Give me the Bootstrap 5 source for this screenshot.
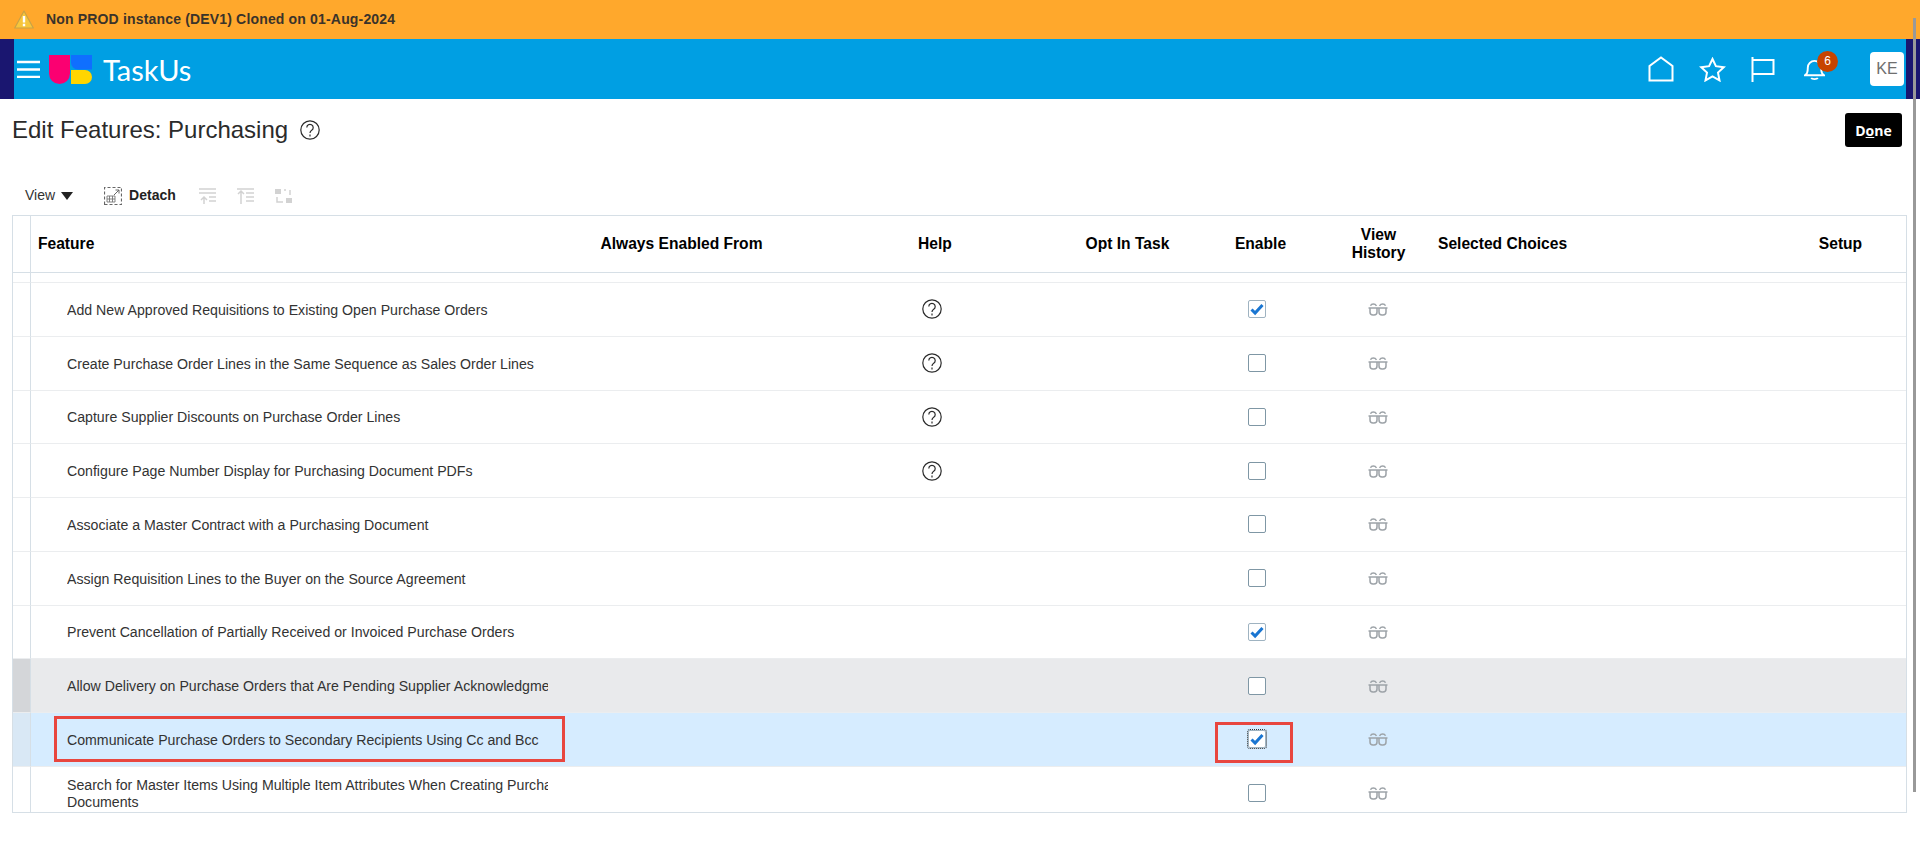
<!DOCTYPE html>
<html lang="en">
<head>
    <meta charset="UTF-8">
    <meta name="viewport" content="width=device-width, initial-scale=1.0">
    <title>Edit Features: Purchasing</title>
    <link href="https://cdn.jsdelivr.net/npm/bootstrap@5.3.0/dist/css/bootstrap.min.css" rel="stylesheet">
    <style>
        html, body { height: 100%; overflow: hidden; }
        body {
            font-family: "Liberation Sans", Arial, sans-serif;
            font-size: 14.15px;
            color: #333;
            background: #fff;
        }
        .env-banner {
            height: 39px;
            background: #ffa82c;
            padding-left: 14px;
            gap: 12px;
            font-weight: 700;
            font-size: 14px;
            color: #3a332a;
            letter-spacing: .012em;
        }
        .top-bar {
            height: 60px;
            background: #009fe3;
            border-left: 14px solid #1a1670;
            border-right: 14px solid #1a1670;
            padding: 0;
        }
        .burger { width: 23px; margin-left: 3px; margin-right: 9px; }
        .brand-name {
            font-family: Lato, sans-serif;
            font-size: 29px;
            font-weight: 400;
            color: #fff;
            line-height: 1;
            margin-left: 11px;
        }
        .top-icons { gap: 25px; }
        .bell-wrap { position: relative; width: 21px; height: 24px; margin-left: 4px; }
        .bell-count {
            position: absolute;
            top: -6px;
            left: 13px;
            width: 21px;
            height: 21px;
            border-radius: 50%;
            background: #c74400;
            color: #fff;
            font-size: 12px;
            line-height: 21px;
            text-align: center;
        }
        .user-tile {
            width: 34px;
            height: 34px;
            margin-left: 20px;
            margin-right: 2px;
            border-radius: 4px;
            background: #fff;
            color: #6f6f6f;
            font-size: 16px;
            line-height: 34px;
            text-align: center;
        }
        .page-head { padding: 13px 18px 0 12px; height: 79px; }
        .page-title { font-size: 24px; font-weight: 400; line-height: 36px; margin: 0; color: #2b2b2b; }
        .btn-done {
            width: 57px;
            height: 34px;
            padding: 0;
            margin-top: 1px;
            background: #000;
            color: #fff;
            border: 0;
            border-radius: 3px;
            font-family: "Open Sans", sans-serif;
            font-weight: 700;
            font-size: 14px;
        }
        .btn-done:hover { background: #000; color: #fff; }
        .tool-row { height: 35px; padding-left: 25px; margin-bottom: 2px; font-size: 14px; }
        .view-caret {
            width: 0;
            height: 0;
            margin: 0 31px 0 6px;
            border-left: 6px solid transparent;
            border-right: 6px solid transparent;
            border-top: 8px solid #222;
        }
        .detach-label { font-weight: 700; color: #222; margin: 0 23px 0 7px; }
        .off-icons { gap: 21px; }
        .table-frame {
            margin-left: 12px;
            width: 1895px;
            height: 598px;
            overflow: hidden;
            border: 1px solid #d6dfe6;
        }
        .feat-table {
            table-layout: fixed;
            width: 1893px;
            margin: 0;
            border-collapse: separate;
            border-spacing: 0;
            --bs-table-bg: transparent;
        }
        .feat-table.table > :not(caption) > * > * {
            padding: 0;
            border-bottom: 1px solid #ebedef;
            vertical-align: middle;
            box-shadow: none;
            color: #333;
        }
        .feat-table.table > thead > tr > th {
            height: 57px;
            font-size: 15.6px;
            line-height: 18px;
            color: #000;
            border-bottom-color: #d6dfe6;
        }
        .feat-table td { height: 53.75px; }
        .feat-table .gap-row td { height: 10px; }
        .feat-table.table > * > tr > .sel-cell { border-right: 1px solid #d6dfe6; }
        .feat-table .row-hover td { background: #e9eaec; }
        .feat-table .row-hover .sel-cell { background: #d4d6d9; }
        .feat-table .row-current td { background: #d6ecff; }
        .feat-table .row-current .sel-cell { background: #d9e8f5; }
        .feat-table.table > thead > tr > .name-head { padding-left: 7px; }
        .feat-table.table > tbody > tr > .name-cell { position: relative; padding: 2px 0 0 36px; }
        .name-clip { width: 481px; overflow: hidden; white-space: nowrap; line-height: 17px; }
        .help-ico { display: block; margin: 0 auto; position: relative; left: -3px; }
        .form-check-input.tick-box {
            display: block;
            width: 18px;
            height: 18px;
            margin: 0 0 0 54px;
            float: none;
            border: 1px solid #7f97a5;
            border-radius: 2px;
            background-color: #fff;
            box-shadow: none;
        }
        .form-check-input.tick-box:checked {
            background-color: #fff;
            border-color: #9fb3c1;
            background-image: url("data:image/svg+xml,%3csvg xmlns='http://www.w3.org/2000/svg' viewBox='0 0 18 18'%3e%3cpath fill='none' stroke='%231a76d2' stroke-width='3' d='M3.500 9.500l3.600 3.600 7.400-8.200'/%3e%3c/svg%3e");
            background-size: 18px 18px;
        }
        .form-check-input.tick-box.is-focus { outline: 1px dotted #333; outline-offset: 0; }
        .hist-ico { display: block; margin: 0 auto; position: relative; left: -1px; }
        .feat-table.table > thead > tr > .pad-left { padding-left: 8px; }
        .red-box { position: absolute; border: 3px solid #e8463f; pointer-events: none; }
        .red-name { left: 23px; top: 3px; width: 511px; height: 46px; }
        .red-tick { left: 21px; top: 9px; width: 78px; height: 41px; }
        .enable-cell { position: relative; }
        .fake-scroll {
            position: fixed;
            left: 1913px;
            top: 18px;
            width: 3px;
            height: 774px;
            background: #999;
        }
    </style>
</head>
<body>
    <svg width="0" height="0" class="position-absolute">
        <symbol id="ico-help" viewBox="0 0 20 20">
            <circle cx="10" cy="10" r="9.200" fill="none" stroke="#2b2b2b" stroke-width="1.200"/>
            <path d="M6.800 7.600a3.200 3.200 0 1 1 4.900 2.700c-1.100.7-1.700 1.200-1.700 2.700" fill="none" stroke="#2b2b2b" stroke-width="1.200"/>
            <path d="M10 14.600v2" stroke="#2b2b2b" stroke-width="1.200"/>
        </symbol>
        <symbol id="ico-hist" viewBox="0 0 20 14">
            <g fill="none" stroke="#9da3a8" stroke-width="1.500">
                <path d="M.5 6h19"/>
                <path d="M2 6v4a3 3 0 0 0 3 3h1a3 3 0 0 0 3-3V6"/>
                <path d="M11 6v4a3 3 0 0 0 3 3h1a3 3 0 0 0 3-3V6"/>
                <path d="M2.500 3.800C3.500 1.500 7 1.500 8.500 3.800"/>
                <path d="M11.500 3.800C13 1.500 16.500 1.500 17.500 3.800"/>
            </g>
        </symbol>
    </svg>

    <div class="env-banner d-flex align-items-center">
        <svg width="20" height="19" viewBox="0 0 20 19">
            <path d="M10 1L19.300 18H.7Z" fill="#f7c63c" stroke="#c9a246" stroke-width="1.200" stroke-linejoin="round"/>
            <path d="M10 6v6.500M10 13.800v2.400" stroke="#fff" stroke-width="2.400"/>
        </svg>
        <span>Non PROD instance (DEV1) Cloned on 01-Aug-2024</span>
    </div>

    <nav class="navbar top-bar flex-nowrap justify-content-between">
        <div class="d-flex align-items-center">
            <svg class="burger" height="18" viewBox="0 0 23 18">
                <path d="M0 2h23M0 9.500h23M0 17h23" stroke="#fff" stroke-width="2.500"/>
            </svg>
            <svg width="43" height="29" viewBox="0 0 43 29">
                <path d="M0 0h21v18.500a10.500 10.500 0 0 1-21 0Z" fill="#fb0071"/>
                <path d="M22 0h21v14.500h-14a7 7 0 0 1-7-7Z" fill="#0f6fff"/>
                <path d="M22 15h14a7 7 0 0 1 7 7 7 7 0 0 1-7 7H22Z" fill="#ffd500"/>
            </svg>
            <span class="brand-name">TaskUs</span>
        </div>
        <div class="d-flex align-items-center top-icons">
            <svg width="26" height="26" viewBox="0 0 26 26">
                <path d="M1.500 24.500V10L13 1.500 24.500 10v14.500Z" fill="none" stroke="#fff" stroke-width="2"/>
            </svg>
            <svg width="27" height="25" viewBox="0 0 27 25">
                <path d="M13.500 2l3.400 7.200 7.900 1-5.800 5.400 1.500 7.800-7-3.900-7 3.900 1.500-7.800L2.200 10.200l7.900-1Z" fill="none" stroke="#fff" stroke-width="2"/>
            </svg>
            <svg width="24" height="25" viewBox="0 0 24 25">
                <path d="M1.500 0v25M1.500 3h21v14h-21" fill="none" stroke="#fff" stroke-width="2"/>
            </svg>
            <div class="bell-wrap">
                <svg width="21" height="24" viewBox="0 0 22 24">
                    <path d="M1 18.500c2-1.500 3-2.500 3-8a7 7 0 0 1 14 0c0 5.500 1 6.500 3 8Z" fill="none" stroke="#fff" stroke-width="2"/>
                    <path d="M7.500 21.500c1 1.500 6 1.500 7 0" fill="none" stroke="#fff" stroke-width="2"/>
                </svg>
                <span class="bell-count">6</span>
            </div>
            <div class="user-tile">KE</div>
        </div>
    </nav>

    <div class="page-head d-flex justify-content-between align-items-start">
        <div class="d-flex align-items-center gap-2">
            <h1 class="page-title">Edit Features: Purchasing</h1>
            <svg width="20" height="20" class="ms-1"><use href="#ico-help"/></svg>
        </div>
        <button class="btn btn-done" type="button">D<u>o</u>ne</button>
    </div>

    <div class="tool-row d-flex align-items-center">
        <span>View</span>
        <span class="view-caret"></span>
        <svg width="18" height="18" viewBox="0 0 18 18">
            <path d="M.500 17.500V.500h17v17Z" fill="none" stroke="#666" stroke-width="1.200" stroke-dasharray="3 2"/>
            <path d="M10 8l5-5M11.500 3H15v3.500" fill="none" stroke="#666"/>
            <path d="M3 9h8v6H3ZM3 12h8M5.500 9v6M8.500 9v6" fill="none" stroke="#777" stroke-width=".9"/>
        </svg>
        <span class="detach-label">Detach</span>
        <div class="d-flex off-icons">
            <svg width="17" height="16" viewBox="0 0 17 16"><path d="M0 1h17M0 5h17M10 9h7M10 13h7M5 16V9M2 12l3-3 3 3" fill="none" stroke="#d2d2d2" stroke-width="1.500"/></svg>
            <svg width="17" height="16" viewBox="0 0 17 16"><path d="M0 1h17M9 5h8M9 9h8M9 13h8M4 16V3M1 6l3-3 3 3" fill="none" stroke="#d2d2d2" stroke-width="1.500"/></svg>
            <svg width="17" height="16" viewBox="0 0 17 16"><path d="M0 1h6v5H0ZM11 10h6v5h-6Z" fill="#d2d2d2"/><path d="M9 2h2M15 2v5M2 9v5h6" fill="none" stroke="#d2d2d2" stroke-width="1.500"/></svg>
        </div>
    </div>

    <div class="table-frame">
        <table class="table feat-table">
            <colgroup>
                <col style="width:18px"><col style="width:523px"><col style="width:255px"><col style="width:252px">
                <col style="width:133px"><col style="width:133px"><col style="width:103px"><col style="width:345px"><col>
            </colgroup>
            <thead>
                <tr>
                    <th class="sel-cell"></th>
                    <th class="name-head">Feature</th>
                    <th class="text-center">Always Enabled From</th>
                    <th class="text-center">Help</th>
                    <th class="text-center">Opt In Task</th>
                    <th class="text-center">Enable</th>
                    <th class="text-center">View<br>History</th>
                    <th class="pad-left">Selected Choices</th>
                    <th class="text-center">Setup</th>
                </tr>
            </thead>
            <tbody>
                <tr class="gap-row"><td class="sel-cell"></td><td colspan="8"></td></tr>
                <tr>
                    <td class="sel-cell"></td>
                    <td class="name-cell"><div class="name-clip">Add New Approved Requisitions to Existing Open Purchase Orders</div></td>
                    <td></td>
                    <td><svg class="help-ico" width="20" height="20"><use href="#ico-help"/></svg></td>
                    <td></td>
                    <td class="enable-cell"><input class="form-check-input tick-box" type="checkbox" checked></td>
                    <td><svg class="hist-ico" width="20" height="14"><use href="#ico-hist"/></svg></td>
                    <td></td><td></td>
                </tr>
                <tr>
                    <td class="sel-cell"></td>
                    <td class="name-cell"><div class="name-clip">Create Purchase Order Lines in the Same Sequence as Sales Order Lines</div></td>
                    <td></td>
                    <td><svg class="help-ico" width="20" height="20"><use href="#ico-help"/></svg></td>
                    <td></td>
                    <td class="enable-cell"><input class="form-check-input tick-box" type="checkbox"></td>
                    <td><svg class="hist-ico" width="20" height="14"><use href="#ico-hist"/></svg></td>
                    <td></td><td></td>
                </tr>
                <tr>
                    <td class="sel-cell"></td>
                    <td class="name-cell"><div class="name-clip">Capture Supplier Discounts on Purchase Order Lines</div></td>
                    <td></td>
                    <td><svg class="help-ico" width="20" height="20"><use href="#ico-help"/></svg></td>
                    <td></td>
                    <td class="enable-cell"><input class="form-check-input tick-box" type="checkbox"></td>
                    <td><svg class="hist-ico" width="20" height="14"><use href="#ico-hist"/></svg></td>
                    <td></td><td></td>
                </tr>
                <tr>
                    <td class="sel-cell"></td>
                    <td class="name-cell"><div class="name-clip">Configure Page Number Display for Purchasing Document PDFs</div></td>
                    <td></td>
                    <td><svg class="help-ico" width="20" height="20"><use href="#ico-help"/></svg></td>
                    <td></td>
                    <td class="enable-cell"><input class="form-check-input tick-box" type="checkbox"></td>
                    <td><svg class="hist-ico" width="20" height="14"><use href="#ico-hist"/></svg></td>
                    <td></td><td></td>
                </tr>
                <tr>
                    <td class="sel-cell"></td>
                    <td class="name-cell"><div class="name-clip">Associate a Master Contract with a Purchasing Document</div></td>
                    <td></td><td></td><td></td>
                    <td class="enable-cell"><input class="form-check-input tick-box" type="checkbox"></td>
                    <td><svg class="hist-ico" width="20" height="14"><use href="#ico-hist"/></svg></td>
                    <td></td><td></td>
                </tr>
                <tr>
                    <td class="sel-cell"></td>
                    <td class="name-cell"><div class="name-clip">Assign Requisition Lines to the Buyer on the Source Agreement</div></td>
                    <td></td><td></td><td></td>
                    <td class="enable-cell"><input class="form-check-input tick-box" type="checkbox"></td>
                    <td><svg class="hist-ico" width="20" height="14"><use href="#ico-hist"/></svg></td>
                    <td></td><td></td>
                </tr>
                <tr>
                    <td class="sel-cell"></td>
                    <td class="name-cell"><div class="name-clip">Prevent Cancellation of Partially Received or Invoiced Purchase Orders</div></td>
                    <td></td><td></td><td></td>
                    <td class="enable-cell"><input class="form-check-input tick-box" type="checkbox" checked></td>
                    <td><svg class="hist-ico" width="20" height="14"><use href="#ico-hist"/></svg></td>
                    <td></td><td></td>
                </tr>
                <tr class="row-hover">
                    <td class="sel-cell"></td>
                    <td class="name-cell"><div class="name-clip">Allow Delivery on Purchase Orders that Are Pending Supplier Acknowledgment</div></td>
                    <td></td><td></td><td></td>
                    <td class="enable-cell"><input class="form-check-input tick-box" type="checkbox"></td>
                    <td><svg class="hist-ico" width="20" height="14"><use href="#ico-hist"/></svg></td>
                    <td></td><td></td>
                </tr>
                <tr class="row-current">
                    <td class="sel-cell"></td>
                    <td class="name-cell"><div class="name-clip">Communicate Purchase Orders to Secondary Recipients Using Cc and Bcc</div><span class="red-box red-name"></span></td>
                    <td></td><td></td><td></td>
                    <td class="enable-cell"><input class="form-check-input tick-box is-focus" type="checkbox" checked><span class="red-box red-tick"></span></td>
                    <td><svg class="hist-ico" width="20" height="14"><use href="#ico-hist"/></svg></td>
                    <td></td><td></td>
                </tr>
                <tr>
                    <td class="sel-cell"></td>
                    <td class="name-cell"><div class="name-clip">Search for Master Items Using Multiple Item Attributes When Creating Purchase<br>Documents</div></td>
                    <td></td><td></td><td></td>
                    <td class="enable-cell"><input class="form-check-input tick-box" type="checkbox"></td>
                    <td><svg class="hist-ico" width="20" height="14"><use href="#ico-hist"/></svg></td>
                    <td></td><td></td>
                </tr>
            </tbody>
        </table>
    </div>

    <div class="fake-scroll"></div>

    <script src="https://cdn.jsdelivr.net/npm/bootstrap@5.3.0/dist/js/bootstrap.bundle.min.js"></script>
</body>
</html>
